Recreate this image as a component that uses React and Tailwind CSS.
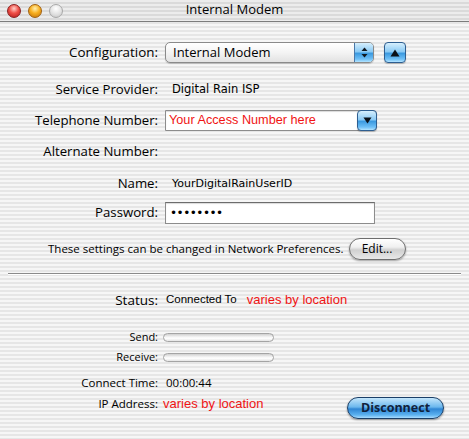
import React from "react";

const stripes =
  "bg-[repeating-linear-gradient(180deg,#f6f6f6_0px,#f6f6f6_2px,#e6e6e6_2px,#e6e6e6_4px)]";
const aquaBlue =
  "bg-[linear-gradient(180deg,#d6effd_0%,#8ccbf5_45%,#3c9ae0_55%,#6fc0f7_85%,#b4e4ff_100%)]";

const Label = ({ children, className = "" }) => (
  <div className={`w-[158px] shrink-0 text-right ${className}`}>{children}</div>
);

const Light = ({ className }) => (
  <div className={`h-[14px] w-[14px] rounded-full border ${className}`} />
);

const App = () => {
  return (
    <div
      className={`w-[469px] h-[439px] overflow-hidden flex flex-col text-black font-['Open_Sans',sans-serif] ${stripes}`}
    >
      {/* Title bar */}
      <div className="relative h-[22px] shrink-0 flex items-center border-b border-[#7c7c7c] bg-[repeating-linear-gradient(180deg,#ececec_0px,#ececec_2px,#dadada_2px,#dadada_4px)]">
        <div className="flex items-center gap-[7px] pl-[7px]">
          <Light className="border-[#8a2020] bg-[radial-gradient(circle_at_50%_30%,#ffd0c8_0%,#f05048_45%,#b01818_100%)]" />
          <Light className="border-[#a06010] bg-[radial-gradient(circle_at_50%_30%,#fff0b0_0%,#f8b020_45%,#c07008_100%)]" />
          <Light className="border-[#a8a8a8] bg-[radial-gradient(circle_at_50%_30%,#ffffff_0%,#e4e4e4_50%,#c4c4c4_100%)]" />
        </div>
        <div className="absolute inset-0 flex items-center justify-center text-[13px] pb-px">
          Internal Modem
        </div>
      </div>

      {/* Configuration */}
      <div className="mt-[20px] h-[21px] flex items-center text-[13.4px]">
        <Label>Configuration:</Label>
        <div className="ml-[7px] w-[209px] h-[21px] flex rounded-[5px] border border-[#8a8a8a] overflow-hidden bg-[linear-gradient(180deg,#ffffff_0%,#f4f4f4_50%,#e2e2e2_100%)] shadow-[0_1px_1px_rgba(0,0,0,0.2)] text-[13px]">
          <div className="flex-1 pl-[7px] flex items-center">Internal Modem</div>
          <div className={`w-[19px] border-l border-[#4a78a8] flex items-center justify-center ${aquaBlue}`}>
            <svg width="7" height="11" viewBox="0 0 7 11">
              <path d="M3.5 0.5 L6.5 4 L0.5 4 Z" fill="#101820" />
              <path d="M3.5 10.5 L6.5 7 L0.5 7 Z" fill="#101820" />
            </svg>
          </div>
        </div>
        <div className={`ml-[10px] w-[22px] h-[21px] rounded-[4px] border border-[#2e5e90] flex items-center justify-center shadow-[0_1px_1px_rgba(0,0,0,0.25)] ${aquaBlue}`}>
          <svg width="10" height="8" viewBox="0 0 10 8">
            <path d="M5 0.5 L9.5 7.5 L0.5 7.5 Z" fill="#0a1018" />
          </svg>
        </div>
      </div>

      {/* Service Provider */}
      <div className="mt-[17px] h-[20px] flex items-center text-[13.2px]">
        <Label>Service Provider:</Label>
        <div className="ml-[14px] text-[11.5px] font-['DejaVu_Sans',sans-serif]">
          Digital Rain ISP
        </div>
      </div>

      {/* Telephone */}
      <div className="mt-[10px] h-[21px] flex items-center text-[13.2px]">
        <Label>Telephone Number:</Label>
        <div className="ml-[7px] w-[212px] h-[21px] flex border border-[#8c8c8c] rounded-r-[4px] bg-white shadow-[inset_0_1px_1px_rgba(0,0,0,0.15)]">
          <div className="flex-1 pl-[3px] flex items-center text-[12.7px] text-[#f01414] font-['Liberation_Sans',sans-serif]">
            Your Access Number here
          </div>
          <div className={`w-[20px] -my-px -mr-px rounded-[4px] border border-[#2e5e90] flex items-center justify-center shadow-[0_1px_1px_rgba(0,0,0,0.25)] ${aquaBlue}`}>
            <svg width="9" height="7" viewBox="0 0 9 7">
              <path d="M0.5 0.5 L8.5 0.5 L4.5 6.5 Z" fill="#0a1018" />
            </svg>
          </div>
        </div>
      </div>

      {/* Alternate */}
      <div className="mt-[11px] h-[20px] flex items-center text-[13.2px]">
        <Label>Alternate Number:</Label>
      </div>

      {/* Name */}
      <div className="mt-[12px] h-[20px] flex items-center text-[13.2px]">
        <Label>Name:</Label>
        <div className="ml-[14px] text-[11px] font-['DejaVu_Sans',sans-serif]">
          YourDigitalRainUserID
        </div>
      </div>

      {/* Password */}
      <div className="mt-[8px] h-[22px] flex items-center text-[13.2px]">
        <Label>Password:</Label>
        <div className="ml-[7px] w-[210px] h-[22px] flex items-center border border-[#8c8c8c] border-t-[#6c6c6c] bg-white pl-[4px] shadow-[inset_0_1px_1px_rgba(0,0,0,0.15)]">
          <span className="text-[12px] tracking-[-0.5px] font-['DejaVu_Sans',sans-serif]">
            ••••••••
          </span>
        </div>
      </div>

      {/* Settings note */}
      <div className="mt-[14px] h-[22px] flex items-center pl-[48px]">
        <span className="text-[11.5px]">
          These settings can be changed in Network Preferences.
        </span>
        <div className="ml-[5px] w-[57px] h-[22px] rounded-full border border-[#6e6e6e] flex items-center justify-center text-[12px] bg-[linear-gradient(180deg,#ffffff_0%,#f0f0f0_40%,#d0d0d0_55%,#e8e8e8_100%)] shadow-[0_1px_2px_rgba(0,0,0,0.35)]">
          Edit...
        </div>
      </div>

      {/* Separator */}
      <div className="mt-[13px] mx-[8px] h-px bg-[#8a8a8a] shadow-[0_1px_0_#ffffff]" />

      {/* Status */}
      <div className="mt-[16px] h-[20px] flex items-center">
        <Label className="text-[13.5px]">Status:</Label>
        <div className="ml-[8px] text-[11.5px] font-['Liberation_Sans',sans-serif]">
          Connected To
        </div>
        <div className="ml-[10px] text-[13px] text-[#f01414] font-['Liberation_Sans',sans-serif]">
          varies by location
        </div>
      </div>

      {/* Send */}
      <div className="mt-[20px] h-[14px] flex items-center text-[11px]">
        <Label>Send:</Label>
        <div className="ml-[5px] w-[111px] h-[9px] rounded-full border border-[#a4a4a4] bg-[linear-gradient(180deg,#cfcfcf_0%,#f2f2f2_40%,#ffffff_60%,#e4e4e4_100%)]" />
      </div>

      {/* Receive */}
      <div className="mt-[6px] h-[14px] flex items-center text-[11px]">
        <Label>Receive:</Label>
        <div className="ml-[5px] w-[111px] h-[9px] rounded-full border border-[#a4a4a4] bg-[linear-gradient(180deg,#cfcfcf_0%,#f2f2f2_40%,#ffffff_60%,#e4e4e4_100%)]" />
      </div>

      {/* Connect Time */}
      <div className="mt-[11px] h-[16px] flex items-center text-[11.5px]">
        <Label>Connect Time:</Label>
        <div className="ml-[8px]">00:00:44</div>
      </div>

      {/* IP Address + Disconnect */}
      <div className="mt-[5px] flex items-start">
        <div className="h-[16px] flex items-center">
          <Label className="text-[11.5px]">IP Address:</Label>
          <div className="ml-[5px] text-[13px] text-[#f01414] font-['Liberation_Sans',sans-serif]">
            varies by location
          </div>
        </div>
        <div className="ml-auto mr-[25px] mt-px w-[97px] h-[22px] rounded-full border border-[#1a3f68] flex items-center justify-center text-[12.5px] font-bold text-[#10223c] shadow-[0_1px_2px_rgba(0,0,0,0.4)] bg-[linear-gradient(180deg,#c4e6fb_0%,#6cb8ee_45%,#2f86d4_55%,#5cb2f0_85%,#a8dcff_100%)]">
          Disconnect
        </div>
      </div>
    </div>
  );
};

export default App;
